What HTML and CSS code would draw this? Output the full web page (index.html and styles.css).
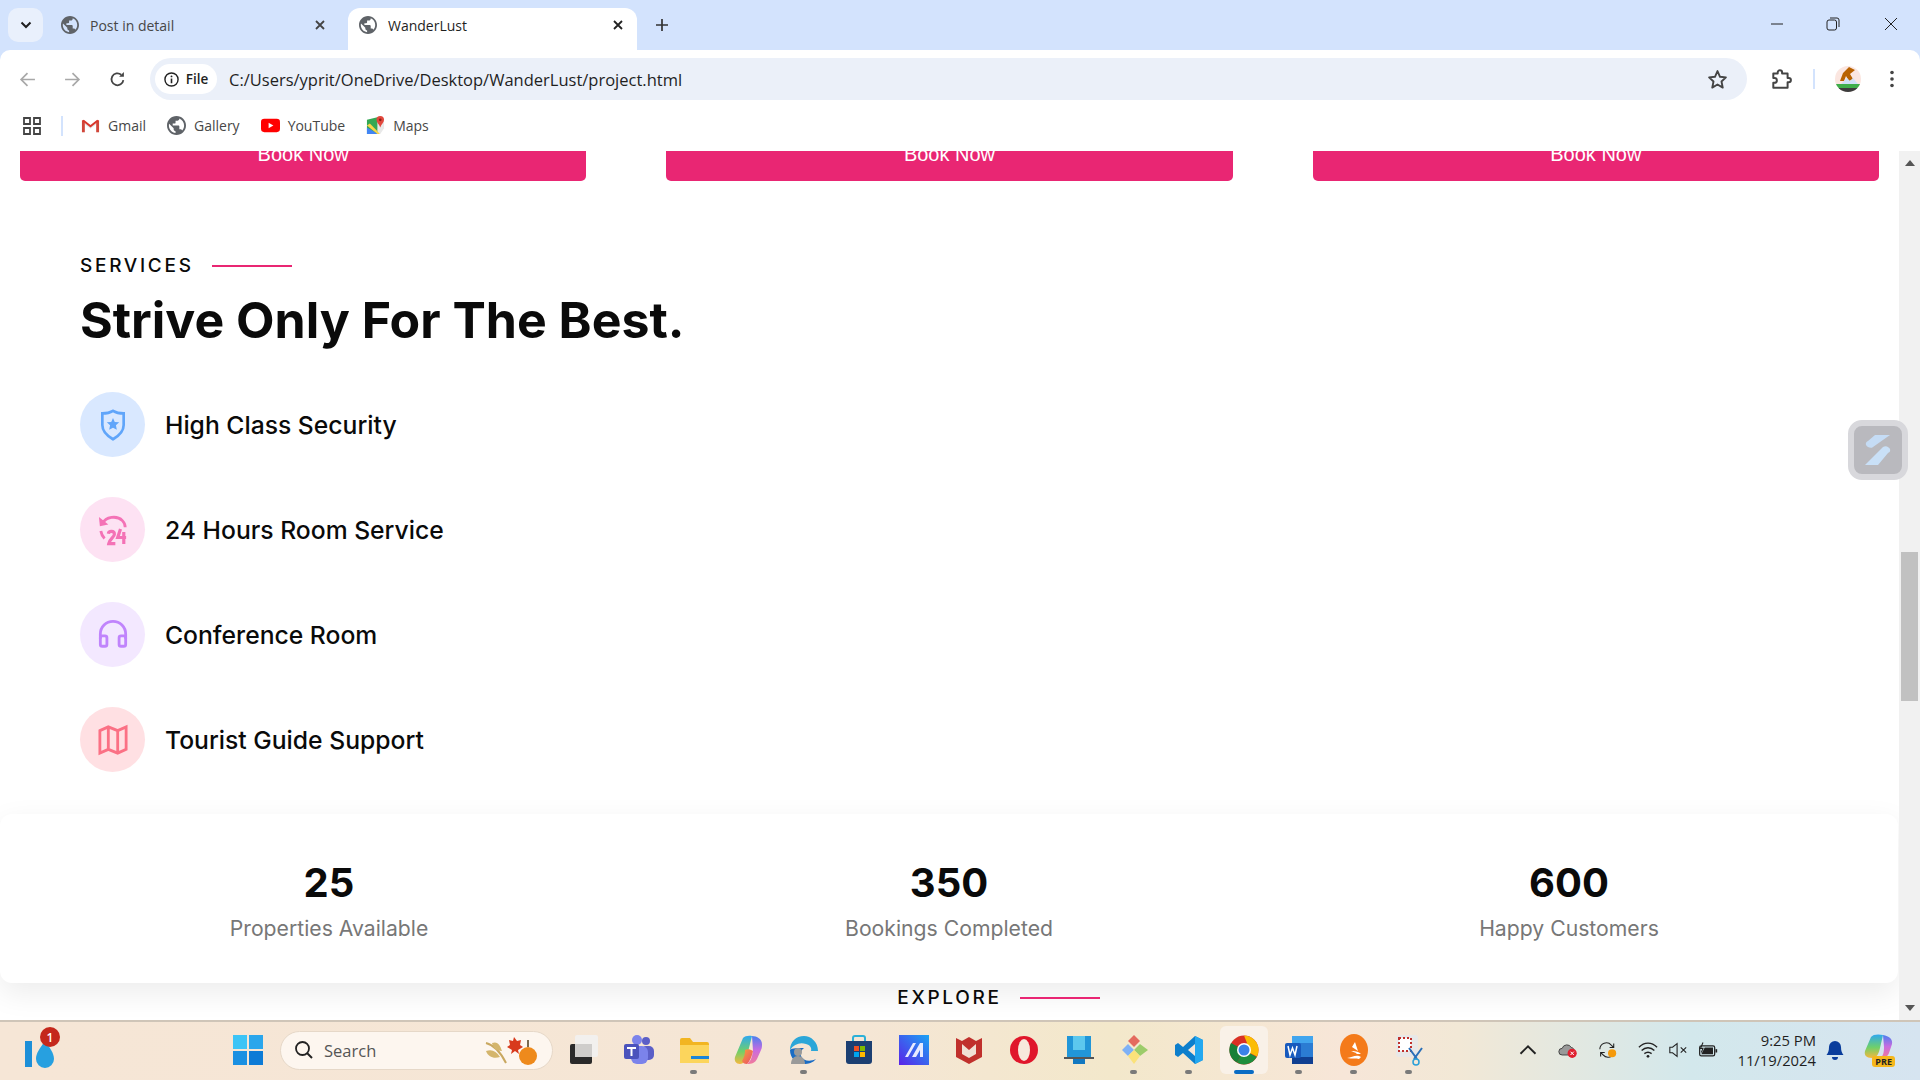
FILE: index.html
```html
<!DOCTYPE html>
<html lang="en">
<head>
    <meta charset="UTF-8">
    <title>WanderLust</title>
    <link rel="stylesheet" href="styles.css">
</head>
<body>
    <svg class="defs" width="0" height="0">
        <symbol id="globe" viewBox="2 2 20 20"><path d="M12 2C6.480 2 2 6.480 2 12s4.480 10 10 10 10-4.480 10-10S17.520 2 12 2zm-1 17.930c-3.950-.490-7-3.850-7-7.930 0-.620.080-1.210.210-1.790L9 15v1c0 1.100.900 2 2 2v1.930zm6.900-2.540c-.260-.810-1-1.390-1.900-1.390h-1v-3c0-.550-.450-1-1-1H8v-2h2c.550 0 1-.450 1-1V7h2c1.100 0 2-.900 2-2v-.410c2.930 1.190 5 4.060 5 7.410 0 2.080-.800 3.970-2.100 5.390z" fill="#5f6368"/></symbol>
        <linearGradient id="cp1" x1="0" y1="0" x2="0" y2="1"><stop offset="0" stop-color="#2fa8f0"/><stop offset="0.55" stop-color="#6fd06a"/><stop offset="1" stop-color="#f6b73c"/></linearGradient>
        <linearGradient id="cp2" x1="0" y1="0" x2="0" y2="1"><stop offset="0" stop-color="#4a7ff0"/><stop offset="0.5" stop-color="#c86be0"/><stop offset="1" stop-color="#f27a9a"/></linearGradient>
        <linearGradient id="cp3" x1="0" y1="0" x2="1" y2="1"><stop offset="0" stop-color="#f6a03a"/><stop offset="1" stop-color="#ea4a6a"/></linearGradient>
    </svg>
    <div class="screen">
        <header class="tabstrip">
            <button class="tab-menu"><svg width="12" height="8" viewBox="0 0 12 8"><path d="M1.500 1.500 6 6l4.500-4.500" fill="none" stroke="#1f1f1f" stroke-width="2"/></svg></button>
            <div class="tab">
                <svg class="globe"><use href="#globe"/></svg>
                <span class="tab-title">Post in detail</span>
                <svg class="tab-x" viewBox="0 0 12 12"><path d="M2 2l8 8M10 2l-8 8" stroke="#444" stroke-width="1.800"/></svg>
            </div>
            <div class="tab active">
                <svg class="globe"><use href="#globe"/></svg>
                <span class="tab-title">WanderLust</span>
                <svg class="tab-x" viewBox="0 0 12 12"><path d="M2 2l8 8M10 2l-8 8" stroke="#222" stroke-width="1.800"/></svg>
            </div>
            <svg class="tab-plus" viewBox="0 0 14 14"><path d="M7 1v12M1 7h12" stroke="#333" stroke-width="1.700"/></svg>
            <div class="win-controls">
                <svg viewBox="0 0 14 14"><path d="M1 7h12" stroke="#222"/></svg>
                <svg viewBox="0 0 14 14"><rect x="1" y="3" width="9.500" height="10" rx="2" fill="none" stroke="#222"/><path d="M4 1h7a2 2 0 0 1 2 2v7" fill="none" stroke="#222"/></svg>
                <svg viewBox="0 0 14 14"><path d="M1 1l12 12M13 1 1 13" stroke="#222"/></svg>
            </div>
        </header>

        <div class="toolbar">
            <svg class="nav-icon" viewBox="0 0 16 16"><path d="M15 8H2M8 2 2 8l6 6" fill="none" stroke="#a8a8a8" stroke-width="1.600"/></svg>
            <svg class="nav-icon" viewBox="0 0 16 16"><path d="M1 8h13M8 2l6 6-6 6" fill="none" stroke="#a8a8a8" stroke-width="1.600"/></svg>
            <svg class="nav-icon" viewBox="0 0 16 16"><path d="M13.500 8.500A5.600 5.600 0 1 1 11.500 3.500" fill="none" stroke="#444" stroke-width="1.700"/><path d="M9.500 5.500h4.500V1z" fill="#444"/></svg>
            <div class="omnibox">
                <div class="chip">
                    <svg width="15" height="15" viewBox="0 0 16 16"><circle cx="8" cy="8" r="7" fill="none" stroke="#222" stroke-width="1.500"/><path d="M8 7v5" stroke="#222" stroke-width="1.700"/><circle cx="8" cy="4.700" r="1" fill="#222"/></svg>
                    <b>File</b>
                </div>
                <span class="url">C:/Users/yprit/OneDrive/Desktop/WanderLust/project.html</span>
                <svg class="star" viewBox="0 0 20 20"><path d="M10 2l2.400 5.400 5.600.600-4.200 3.900 1.200 5.800L10 14.800l-5 2.900 1.200-5.800L2 8l5.600-.600z" fill="none" stroke="#444" stroke-width="1.800" stroke-linejoin="round"/></svg>
            </div>
            <svg class="puzzle" viewBox="0 0 20 20"><path d="M3 5h4V4a2 2 0 0 1 4 0v1h5v4h1a2 2 0 0 1 0 4h-1v5H3v-4.500h1a2.200 2.200 0 0 0 0-4.500H3z" fill="none" stroke="#444" stroke-width="1.800" stroke-linejoin="round"/></svg>
            <i class="tool-sep"></i>
            <svg class="avatar" viewBox="0 0 26 26">
                <defs><clipPath id="av"><circle cx="13" cy="13" r="13"/></clipPath></defs>
                <g clip-path="url(#av)">
                    <rect width="26" height="26" fill="#fbe6e0"/>
                    <path d="M5 15 8 7l6-6 6 3-5 4 3 5-4 2-3-5-2 5z" fill="#b96200"/>
                    <path d="M6 18l6-6 3 3 3-3 5 6z" fill="#cfe0f6"/>
                    <rect y="18" width="26" height="4" fill="#3fae4a"/>
                    <rect y="22" width="26" height="4" fill="#3c3c3c"/>
                </g>
            </svg>
            <svg class="dots" viewBox="0 0 6 18"><circle cx="3" cy="2.500" r="1.800" fill="#444"/><circle cx="3" cy="9" r="1.800" fill="#444"/><circle cx="3" cy="15.500" r="1.800" fill="#444"/></svg>
        </div>

        <nav class="bookmarks">
            <svg class="apps" viewBox="0 0 18 18"><path d="M1 1h6v6H1zM11 1h6v6h-6zM1 11h6v6H1zM11 11h6v6h-6z" fill="none" stroke="#444" stroke-width="1.800"/></svg>
            <i class="mark-sep"></i>
            <a class="mark">
                <svg viewBox="0 0 20 16"><path d="M1 15V3l9 6.500L19 3v12h-3V7l-6 4.500L4 7v8z" fill="#e8e8e8"/><path d="M1 15V2.500L4 4v11zM19 15V2.500L16 4v11z" fill="#d2463a"/><path d="M1 3l2-1 7 5.500L17 2l2 1-9 7z" fill="#d9362b"/></svg>
                Gmail
            </a>
            <a class="mark">
                <svg><use href="#globe"/></svg>
                Gallery
            </a>
            <a class="mark">
                <svg viewBox="0 0 20 14"><rect width="20" height="14" rx="3.500" fill="#f00"/><path d="M8 4l5 3-5 3z" fill="#fff"/></svg>
                YouTube
            </a>
            <a class="mark">
                <svg viewBox="0 0 20 20"><path d="M1 4l12-3v18L1 19z" fill="#34a853"/><path d="M1 12l12 7H1z" fill="#4285f4"/><path d="M1 10l3-2 11 11h-3z" fill="#fbd44a"/><path d="M12 3h7v10l-4 6-3-3z" fill="#e8e8e8"/><path d="M15 0a4 4 0 0 1 4 4c0 3-3 5-4 8-1-3-4-5-4-8a4 4 0 0 1 4-4z" fill="#e2483d"/><circle cx="15" cy="4" r="1.400" fill="#8c1f18"/></svg>
                Maps
            </a>
        </nav>

        <div class="viewport">
            <main class="page">
                <div class="book-row">
                    <button class="book-btn">Book Now</button>
                    <button class="book-btn">Book Now</button>
                    <button class="book-btn">Book Now</button>
                </div>

                <section class="services">
                    <p class="eyebrow">SERVICES</p>
                    <h2>Strive Only For The Best.</h2>
                    <ul class="service-list">
                        <li>
                            <span class="ico blue">
                                <svg viewBox="0 0 30 36"><path d="M15 2c4 2.500 8 3 12 3v13c0 7-5 12-12 16C8 30 3 25 3 18V5c4 0 8-.500 12-3z" fill="none" stroke="currentColor" stroke-width="3"/><path d="M15 10l2 4.500 5 .500-3.700 3.400 1 5L15 21l-4.300 2.400 1-5L8 15l5-.500z" fill="currentColor"/></svg>
                            </span>
                            High Class Security
                        </li>
                        <li>
                            <span class="ico pink">
                                <svg viewBox="0 0 32 34"><path d="M5 10C8 3 20 1 26 7c2 2 3 4 3 7" fill="none" stroke="currentColor" stroke-width="3"/><path d="M1 3l1 10 9-2z" fill="currentColor"/><path d="M3 18c.500 3 2 6 4 8" fill="none" stroke="currentColor" stroke-width="3"/><path d="M11 21c.500-3.500 6.500-3.500 6.500.500 0 3-5 5-6 10h7" fill="none" stroke="currentColor" stroke-width="3.400"/><path d="M24 16l-3 9h9M27.500 19v13" fill="none" stroke="currentColor" stroke-width="3.400"/></svg>
                            </span>
                            24 Hours Room Service
                        </li>
                        <li>
                            <span class="ico purple">
                                <svg viewBox="0 0 32 30"><path d="M2.500 19v-5a13.500 13.500 0 0 1 27 0v5" fill="none" stroke="currentColor" stroke-width="3"/><rect x="2.500" y="16" width="7" height="11" rx="2" fill="none" stroke="currentColor" stroke-width="3"/><rect x="22.500" y="16" width="7" height="11" rx="2" fill="none" stroke="currentColor" stroke-width="3"/></svg>
                            </span>
                            Conference Room
                        </li>
                        <li>
                            <span class="ico red">
                                <svg viewBox="0 0 32 32"><path d="M2 6l9-4 10 4 9-4v24l-9 4-10-4-9 4zM11 2v24M21 6v24" fill="none" stroke="currentColor" stroke-width="3"/></svg>
                            </span>
                            Tourist Guide Support
                        </li>
                    </ul>
                </section>

                <section class="stats">
                    <div class="stat"><strong>25</strong><span>Properties Available</span></div>
                    <div class="stat"><strong>350</strong><span>Bookings Completed</span></div>
                    <div class="stat"><strong>600</strong><span>Happy Customers</span></div>
                </section>

                <p class="eyebrow center">EXPLORE</p>
            </main>

            <div class="scrollbar">
                <svg class="arrow" viewBox="0 0 10 6"><path d="M5 0l5 6H0z" fill="#555"/></svg>
                <div class="track"><div class="thumb"></div></div>
                <svg class="arrow" viewBox="0 0 10 6"><path d="M5 6 0 0h10z" fill="#555"/></svg>
            </div>

            <div class="float-widget">
                <svg width="28" height="34" viewBox="0 0 28 34"><path d="M11 2h15L9 14c-2 2-6 0-7-2-.500-2 0-3 2-4z" fill="#c5dcf5"/><path d="M19 14c3-2 6 0 7 2 .500 2 0 3-2 4L14 32H1z" fill="#c9e0f7"/></svg>
            </div>
        </div>

        <footer class="taskbar">
            <div class="weather">
                <svg width="34" height="38" viewBox="0 0 34 38"><rect x="1" y="10" width="7" height="26" fill="#1d8fd8"/><path d="M21 10c5 7 9 12 9 18a9 9 0 0 1-18 0c0-6 4-11 9-18z" fill="#27a0e0"/></svg>
                <span class="badge">1</span>
            </div>
            <div class="slot start">
                <svg width="30" height="30" viewBox="0 0 30 30"><rect width="14" height="14" fill="#3cc4f6"/><rect x="16" width="14" height="14" fill="#2aa6ec"/><rect y="16" width="14" height="14" fill="#1a90e2"/><rect x="16" y="16" width="14" height="14" fill="#0d7bd6"/></svg>
            </div>
            <div class="search">
                <svg width="20" height="20" viewBox="0 0 20 20"><circle cx="8.500" cy="8.500" r="6.500" fill="none" stroke="#222" stroke-width="1.800"/><path d="M13 13l5 5" stroke="#222" stroke-width="2"/></svg>
                <span>Search</span>
                <svg class="search-art" width="60" height="30" viewBox="0 0 60 30">
                    <path d="M2 8c8 2 14 8 20 20" fill="none" stroke="#c9a860" stroke-width="2"/>
                    <path d="M8 8c6-2 8 2 10 8-6 0-9-3-10-8zM2 16c6-2 10 0 14 6-6 2-12 0-14-6z" fill="#d4b56c"/>
                    <path d="M30 2l3 4 4-1-1 5 3 2-5 3 1 4-4-3-4 3 1-4-5-3 3-2-1-5 4 1z" fill="#d83a1c"/>
                    <circle cx="44" cy="21" r="9" fill="#ee8a1c"/><path d="M44 12V5" stroke="#7a6a50" stroke-width="2"/>
                </svg>
            </div>
            <div class="slot first-app">
                <svg width="30" height="30" viewBox="0 0 30 30"><rect x="6" y="0" width="23" height="22" rx="2" fill="#f2f0ee"/><rect x="1" y="9" width="22" height="20" rx="2" fill="#2a2a2a"/><rect x="6" y="9" width="17" height="13" fill="#cfcdcb"/></svg>
            </div>
            <div class="slot">
                <svg width="32" height="30" viewBox="0 0 32 30"><circle cx="23" cy="6" r="4" fill="#5b5fc7"/><circle cx="14" cy="5" r="5" fill="#7b83eb"/><rect x="18" y="11" width="13" height="14" rx="5" fill="#5b5fc7"/><rect x="8" y="11" width="17" height="18" rx="6" fill="#7b83eb"/><rect x="1" y="9" width="15" height="15" rx="2" fill="#4b53bc"/><path d="M4 12h9v2H9.500v7h-2v-7H4z" fill="#fff"/></svg>
            </div>
            <div class="slot dot">
                <svg width="30" height="28" viewBox="0 0 30 28"><path d="M1 4a2 2 0 0 1 2-2h8l3 4h14a2 2 0 0 1 2 2v18H1z" fill="#f2b521"/><rect x="1" y="9" width="29" height="18" fill="#fcd55c"/><rect x="12" y="20" width="18" height="3" fill="#1b86d8"/></svg>
            </div>
            <div class="slot">
                <svg width="30" height="30" viewBox="0 0 30 30"><path d="M9 3c2-2 5-2.500 9-2l-5 20c-1 5-4 8-7 8-4 0-6-3-5-7z" fill="url(#cp1)"/><path d="M18 1c5 0 10 3 10 8 0 2 0 4-1 6l-4 9c-2 4-5 5-10 5 4-3 5-7 6-13z" fill="url(#cp2)"/><path d="M11 15c2-1 5-1 8 1-1 5-3 10-6 13-3 0-4-1-5-3 2-3 3-7 3-11z" fill="url(#cp3)"/></svg>
            </div>
            <div class="slot dot">
                <svg width="30" height="30" viewBox="0 0 30 30"><path d="M29 16C29 7 22 1 15 1 7 1 1 7 1 15c4-6 10-8 16-6 4 1 6 4 5 7z" fill="#2ba6d8"/><path d="M1 15c0 8 6 14 14 14 4 0 9-1 12-5-6 3-13 2-15-3-1-3 0-6 3-8-6 0-12 0-14 2z" fill="#1a6cc4"/><circle cx="9" cy="17" r="4" fill="#999"/><path d="M2 29c0-5 3-8 7-8s7 3 7 8z" fill="#9a9a9a"/></svg>
            </div>
            <div class="slot">
                <svg width="28" height="30" viewBox="0 0 28 30"><path d="M8 7V3a2 2 0 0 1 2-2h8a2 2 0 0 1 2 2v4" fill="none" stroke="#2bb0d8" stroke-width="2"/><path d="M1 6h26v20a3 3 0 0 1-3 3H4a3 3 0 0 1-3-3z" fill="#1c3f72"/><rect x="9" y="11" width="5" height="5" fill="#f25022"/><rect x="15" y="11" width="5" height="5" fill="#7fba00"/><rect x="9" y="17" width="5" height="5" fill="#00a4ef"/><rect x="15" y="17" width="5" height="5" fill="#ffb900"/></svg>
            </div>
            <div class="slot">
                <svg width="30" height="30" viewBox="0 0 30 30"><defs><linearGradient id="mz" x1="0" y1="1" x2="1" y2="0"><stop offset="0" stop-color="#5a22e8"/><stop offset="1" stop-color="#1ba4f4"/></linearGradient></defs><rect width="30" height="30" fill="url(#mz)"/><path d="M6 22 14 8h3L9 22zM13 22l8-14h3v14h-3v-7l-4 7z" fill="#e8eaff"/></svg>
            </div>
            <div class="slot">
                <svg width="28" height="30" viewBox="0 0 28 30"><path d="M1 3l6 3 7-4 7 4 6-3v19l-13 7-13-7z" fill="#c0302c"/><path d="M7 9l7 6 7-6v10l-7 4-7-4z" fill="#f0e0d4"/></svg>
            </div>
            <div class="slot">
                <svg width="30" height="30" viewBox="0 0 30 30"><circle cx="15" cy="15" r="14" fill="#e0162b"/><ellipse cx="15" cy="15" rx="6" ry="11" fill="#f7e9dc"/></svg>
            </div>
            <div class="slot">
                <svg width="30" height="30" viewBox="0 0 30 30"><rect x="3" y="1" width="24" height="22" fill="#2196d8"/><rect x="9" y="1" width="12" height="14" fill="#5cc8ee"/><rect x="0" y="22" width="30" height="2" fill="#555"/><rect x="9" y="24" width="12" height="5" fill="#1278c0"/></svg>
            </div>
            <div class="slot dot">
                <svg width="30" height="30" viewBox="0 0 30 30"><path d="M15 0l6 6-6 6-6-6z" fill="#e46a5e"/><path d="M3 15l6-6 6 6-6 6z" fill="#7eb1f6"/><path d="M15 15l6-6 8 6-8 6z" fill="#9ccc6a"/><path d="M9 21l6-6 6 6-6 8z" fill="#fbe27a"/></svg>
            </div>
            <div class="slot dot">
                <svg width="30" height="30" viewBox="0 0 30 30"><path d="M21 1l8 4v20l-8 4L9 18l-5 4-3-2v-10l3-2 5 4z" fill="#0d7fcc"/><path d="M21 1l8 4v20l-8 4z" fill="#23a8f0"/><path d="M21 9l-7 6 7 6z" fill="#f5e8da"/></svg>
            </div>
            <div class="slot on">
                <svg width="30" height="30" viewBox="0 0 30 30"><circle cx="15" cy="15" r="14.500" fill="#d93025"/><path d="M15 15l12.700 7A14.500 14.500 0 0 1 8 27.600z" fill="#1e8e3e"/><path d="M15 .500a14.500 14.500 0 0 1 13 21L15 15 18 8z" fill="#fbbc04"/><path d="M15 15 8 27.600A14.500 14.500 0 0 1 2 8z" fill="#188038"/><circle cx="15" cy="15" r="7" fill="#fff"/><circle cx="15" cy="15" r="5.500" fill="#3b82e8"/></svg>
            </div>
            <div class="slot dot">
                <svg width="30" height="30" viewBox="0 0 30 30"><rect x="8" y="1" width="21" height="28" rx="2" fill="#2b7cd3"/><rect x="8" y="1" width="21" height="7" fill="#41a5ee"/><rect x="8" y="22" width="21" height="7" fill="#103f91"/><rect x="1" y="8" width="16" height="15" rx="2" fill="#185abd"/><path d="M4 11l2 9 2.500-7 2.500 7 2-9" fill="none" stroke="#fff" stroke-width="1.500"/></svg>
            </div>
            <div class="slot dot">
                <svg width="30" height="32" viewBox="0 0 30 32"><ellipse cx="15" cy="16" rx="14" ry="16" fill="#f47a1a"/><path d="M8 24c5-1 10-4 14-1l-2 2c-3-1-7 0-12-1zM12 17c3 0 7 0 10 3l-4 0c-2-2-4-2-6-3zM16 8l3 9-6-4z" fill="#fff"/></svg>
            </div>
            <div class="slot dot">
                <svg width="30" height="32" viewBox="0 0 30 32"><rect x="2" y="1" width="22" height="22" rx="3" fill="#e8e8e8"/><rect x="5" y="4" width="12" height="13" fill="#fff" stroke="#c0302c" stroke-width="2" stroke-dasharray="2 2"/><path d="M15 14l8 11M28 14l-8 11" stroke="#2a6fb8" stroke-width="2"/><circle cx="22" cy="28" r="3" fill="none" stroke="#2a9fd8" stroke-width="1.500"/></svg>
            </div>

            <div class="tray">
                <svg class="tray-icon" viewBox="0 0 16 10"><path d="M2 8l6-6 6 6" fill="none" stroke="#222" stroke-width="1.500"/></svg>
                <svg class="tray-icon" viewBox="0 0 24 20"><path d="M5 16a4 4 0 0 1 0-8 6 6 0 0 1 11-1 4 4 0 0 1 3 5l-2 4z" fill="#999" stroke="#333"/><circle cx="17" cy="14" r="5.500" fill="#e02030"/><path d="M15 12l4 4M19 12l-4 4" stroke="#fff" stroke-width="1.200"/></svg>
                <svg class="tray-icon" viewBox="0 0 24 22"><path d="M2 10a8 8 0 0 1 14-5l3 3M19 3v5h-5M20 13a8 8 0 0 1-14 4l-3-3M3 19v-5h5" fill="none" stroke="#222" stroke-width="1.300"/><circle cx="17" cy="15" r="5" fill="#f59a0c"/></svg>
                <svg class="tray-icon" viewBox="0 0 22 18"><path d="M1 6c6-6 14-6 20 0M4 9.500c4-4 10-4 14 0M7 13c2.500-2 5.500-2 8 0" fill="none" stroke="#222" stroke-width="1.500"/><circle cx="11" cy="16" r="1.500" fill="#222"/></svg>
                <svg class="tray-icon" viewBox="0 0 22 18"><path d="M2 6h3l5-4v14l-5-4H2z" fill="none" stroke="#222" stroke-width="1.200"/><path d="M14 6l6 6M20 6l-6 6" stroke="#222" stroke-width="1.200"/></svg>
                <svg class="tray-icon" viewBox="0 0 24 18"><rect x="2" y="4" width="18" height="12" rx="2" fill="none" stroke="#222" stroke-width="1.500"/><path d="M4 14 8 6h10v8z" fill="#222"/><path d="M6 0 3 7h3L4 12" fill="none" stroke="#222" stroke-width="1.300"/><rect x="21" y="8" width="2" height="4" fill="#222"/></svg>
                <div class="clock"><span>9:25 PM</span><span>11/19/2024</span></div>
                <svg class="bell" viewBox="0 0 18 20"><path d="M9 1a6 6 0 0 1 6 6c0 4 1 6 2.500 8H.500C2 13 3 11 3 7a6 6 0 0 1 6-6z" fill="#0a3d9c"/><path d="M6 17h6a3 3 0 0 1-6 0z" fill="#0a3d9c"/></svg>
                <div class="copilot">
                    <svg width="30" height="26" viewBox="0 0 30 26"><path d="M7 3c2-3 8-3 12-2l-3 13c-1 5-3 10-8 10-6 0-8-3-7-7z" fill="url(#cp1)"/><path d="M19 1c6 1 10 4 9 9l-3 9c-1 3-4 5-8 5 2-3 3-5 3-11z" fill="url(#cp2)"/></svg>
                    <span class="pre">PRE</span>
                </div>
            </div>
        </footer>
    </div>
</body>
</html>
```

FILE: styles.css
```css
*{
    padding: 0;
    margin: 0;
    box-sizing: border-box;
}
body
{
    overflow: hidden;
    font-family: "Open Sans", sans-serif;
}
.defs
{
    position: absolute;
}
.screen
{
    width: 100%;
    height: 100vh;
    display: flex;
    flex-direction: column;
    background: #d3e3fd;
}

/* tabs */
.tabstrip
{
    height: 50px;
    flex: none;
    display: flex;
    align-items: flex-end;
    padding-left: 8px;
}
.tab-menu
{
    width: 35px;
    height: 34px;
    margin-bottom: 8px;
    border: none;
    border-radius: 10px;
    background: #e9f0fc;
    display: flex;
    align-items: center;
    justify-content: center;
}
.tab
{
    width: 297px;
    height: 42px;
    padding: 0 22px 8px 10px;
    display: flex;
    align-items: center;
    font-size: 14px;
    color: #474747;
    margin-left: 8px;
}
.tab + .tab
{
    margin-left: 0;
}
.tab.active
{
    width: 289px;
    padding: 0 13px 8px 11px;
    background: #fff;
    color: #1f1f1f;
    border-radius: 12px 12px 0 0;
}
.globe
{
    width: 18px;
    height: 18px;
    margin-right: 11px;
    flex: none;
}
.tab-title
{
    flex: 1;
}
.tab-x
{
    width: 12px;
    height: 12px;
}
.tab-plus
{
    width: 14px;
    height: 14px;
    margin: 0 0 18px 18px;
}
.win-controls
{
    margin-left: auto;
    padding: 0 22px 19px 0;
    display: flex;
    gap: 42px;
}
.win-controls svg
{
    width: 14px;
    height: 14px;
}
.win-controls svg:last-child
{
    margin-left: 2px;
}

/* toolbar */
.toolbar
{
    height: 50px;
    flex: none;
    background: #fff;
    border-radius: 10px 10px 0 0;
    padding: 8px 25px 0 19px;
    display: flex;
    align-items: flex-start;
}
.nav-icon
{
    width: 17px;
    height: 17px;
    margin: 13px 28px 0 0;
}
.nav-icon:nth-child(3)
{
    margin-right: 24px;
}
.omnibox
{
    width: 1597px;
    height: 42px;
    flex: none;
    border-radius: 21px;
    background: #ebf0f9;
    padding: 0 19px 0 5px;
    display: flex;
    align-items: center;
}
.chip
{
    width: 62px;
    height: 30px;
    border-radius: 15px;
    background: #fff;
    display: flex;
    align-items: center;
    justify-content: center;
    gap: 7px;
    font-size: 13.500px;
    color: #1f1f1f;
}
.chip b
{
    font-weight: 600;
}
.url
{
    margin-left: 12px;
    font-size: 16.500px;
    color: #1f1f1f;
    flex: 1;
}
.star
{
    width: 21px;
    height: 21px;
}
.puzzle
{
    width: 22px;
    height: 22px;
    margin: 10px 0 0 23px;
    flex: none;
}
.tool-sep
{
    width: 2px;
    height: 20px;
    background: #d3e3fd;
    margin: 11px 20px 0 21px;
    flex: none;
}
.avatar
{
    width: 26px;
    height: 26px;
    margin-top: 8px;
    flex: none;
}
.dots
{
    width: 6px;
    height: 18px;
    margin: 12px 0 0 auto;
    flex: none;
}

/* bookmarks */
.bookmarks
{
    height: 51px;
    flex: none;
    background: #fff;
    display: flex;
    align-items: center;
    padding-left: 23px;
    font-size: 14px;
    color: #474747;
}
.apps
{
    width: 18px;
    height: 18px;
}
.mark-sep
{
    width: 2px;
    height: 20px;
    background: #d3e3fd;
    margin: 0 18px 0 20px;
}
.mark
{
    display: flex;
    align-items: center;
    gap: 8px;
    margin-right: 21px;
}
.mark svg
{
    width: 19px;
    height: 19px;
}

/* page */
.viewport
{
    flex: 1;
    min-height: 0;
    position: relative;
    display: flex;
    background: #fff;
    overflow: hidden;
}
.page
{
    flex: 1;
    min-width: 0;
    font-family: Inter, sans-serif;
    color: #0a0a0a;
}
.book-row
{
    display: grid;
    grid-template-columns: repeat(3, 1fr);
    gap: 80px;
    padding: 0 20px;
    height: 30px;
}
.book-btn
{
    height: 30px;
    border: none;
    border-radius: 0 0 5px 5px;
    background: #e92673;
    color: #fff;
    font-family: "Liberation Sans", sans-serif;
    font-size: 20px;
    line-height: 7px;
    display: flex;
    justify-content: center;
    align-items: flex-start;
    overflow: hidden;
}
.services
{
    padding: 72px 80px 0;
}
.eyebrow
{
    display: flex;
    align-items: center;
    gap: 18px;
    font-size: 19px;
    font-weight: 500;
    letter-spacing: 2.700px;
    line-height: 26px;
}
.eyebrow::after
{
    content: "";
    width: 80px;
    height: 2px;
    background: #e92673;
}
.eyebrow.center
{
    justify-content: center;
    margin-top: 2px;
}
.eyebrow.center::before
{
    content: "";
    width: 80px;
}
h2
{
    font-size: 50px;
    font-weight: 700;
    line-height: 60px;
    margin-top: 11px;
}
.service-list
{
    list-style: none;
    margin-top: 42px;
    display: flex;
    flex-direction: column;
    gap: 40px;
}
.service-list li
{
    display: flex;
    align-items: center;
    gap: 20px;
    font-size: 24.700px;
    font-weight: 500;
}
.ico
{
    width: 65px;
    height: 65px;
    border-radius: 50%;
    display: flex;
    align-items: center;
    justify-content: center;
    flex: none;
}
.ico svg
{
    width: 30px;
    height: 32px;
}
.blue { background: #d9e8ff; color: #60a5fa; }
.pink { background: #fde2f3; color: #f472b6; }
.purple { background: #f3e8ff; color: #c084fc; }
.red { background: #ffe0e3; color: #fb7185; }

.stats
{
    margin: 42px 1px 0 0;
    height: 169px;
    border-radius: 12px;
    background: #fff;
    box-shadow: 0 10px 30px rgba(0, 0, 0, 0.08);
    padding: 4px 19px 0;
    display: grid;
    grid-template-columns: repeat(3, 1fr);
    align-items: center;
    text-align: center;
}
.stat strong
{
    display: block;
    font-size: 40px;
    line-height: 48px;
    font-weight: 700;
}
.stat span
{
    display: block;
    margin-top: 6px;
    font-size: 21.200px;
    line-height: 30px;
    color: #777;
}

/* scrollbar */
.scrollbar
{
    width: 21px;
    flex: none;
    background: #f1f1f1;
    display: flex;
    flex-direction: column;
    align-items: center;
}
.arrow
{
    width: 10px;
    height: 6px;
    margin: 9px 0;
    flex: none;
}
.track
{
    flex: 1;
    width: 100%;
}
.thumb
{
    height: 149px;
    margin: 377px 2px 0;
    background: #c1c1c1;
}
.float-widget
{
    position: absolute;
    top: 269px;
    right: 12px;
    width: 60px;
    height: 60px;
    border: 6px solid #d8d8dc;
    border-radius: 14px;
    background: #b9b9be;
    display: flex;
    align-items: center;
    justify-content: center;
}

/* windows taskbar */
.taskbar
{
    height: 60px;
    flex: none;
    display: flex;
    align-items: center;
    border-top: 2px solid #cfc5b8;
    padding-bottom: 2px;
    background: linear-gradient(90deg, #f6e6d6 0%, #f5e6d5 45%, #f3e8cb 58%, #f7e6d8 70%, #f2e8d6 76%, #d3e8ec 88%, #d6e4f0 100%);
}
.weather
{
    width: 60px;
    margin-left: 24px;
    position: relative;
    display: flex;
}
.badge
{
    position: absolute;
    left: 16px;
    top: -4px;
    width: 20px;
    height: 20px;
    border-radius: 50%;
    background: #c4281c;
    color: #fff;
    font-size: 12px;
    font-weight: 600;
    display: flex;
    align-items: center;
    justify-content: center;
}
.slot
{
    width: 55px;
    height: 52px;
    flex: none;
    display: flex;
    align-items: center;
    justify-content: center;
    position: relative;
}
.start
{
    margin-left: 136px;
    margin-right: 5px;
}
.first-app
{
    margin-left: 3px;
}
.dot::after,
.on::after
{
    content: "";
    position: absolute;
    bottom: 2px;
    left: 24px;
    width: 7px;
    height: 4px;
    border-radius: 2px;
    background: #7a7a7a;
}
.on
{
    background: #f9f1e8;
    border-radius: 6px;
    width: 48px;
    height: 48px;
    margin: 0 3.500px;
}
.on::after
{
    bottom: 0;
    left: 14px;
    width: 20px;
    background: #0a6cc4;
}
.search
{
    width: 273px;
    height: 39px;
    flex: none;
    border-radius: 20px;
    background: #fdf6ef;
    border: 1px solid #e6d8c8;
    display: flex;
    align-items: center;
    padding: 0 8px 0 13px;
    font-size: 16.500px;
    color: #555;
}
.search span
{
    margin-left: 10px;
    flex: 1;
}
.tray
{
    margin-left: auto;
    height: 100%;
    display: flex;
    align-items: center;
    padding-right: 26px;
}
.tray-icon
{
    width: 20px;
    height: 18px;
    margin-right: 20px;
}
.tray-icon:nth-child(4),
.tray-icon:nth-child(5)
{
    margin-right: 10px;
}
.tray-icon:nth-child(6)
{
    margin-right: 19px;
}
.clock
{
    display: flex;
    flex-direction: column;
    align-items: flex-end;
    font-size: 14.800px;
    line-height: 20px;
    color: #1f1f1f;
}
.bell
{
    width: 18px;
    height: 20px;
    margin-left: 10px;
}
.copilot
{
    margin-left: 20px;
    position: relative;
    width: 30px;
    height: 32px;
}
.pre
{
    position: absolute;
    right: -1px;
    bottom: -1px;
    padding: 0 3px;
    border-radius: 3px;
    background: #f5b71c;
    color: #222;
    font-size: 9px;
    font-weight: 700;
    line-height: 11px;
}
```
